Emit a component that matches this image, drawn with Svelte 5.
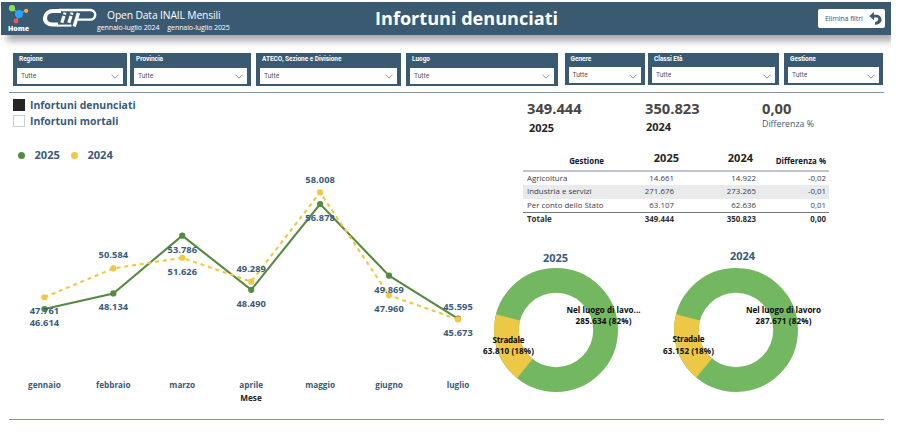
<script lang="ts">
  type Point = { month: string; y2025: number; y2024: number; label2025: number; label2024: number };

  const filters = [
    { name: 'Regione', width: 114, gap: 3 },
    { name: 'Provincia', width: 121, gap: 5 },
    { name: 'ATECO, Sezione e Divisione', width: 145, gap: 5 },
    { name: 'Luogo', width: 152, gap: 6.5 },
    { name: 'Genere', width: 80, gap: 3.5, short: true },
    { name: 'Classi Età', width: 131, gap: 5, short: true },
    { name: 'Gestione', width: 99, gap: 0, short: true }
  ];

  // label offsets are measured from the marker to the text baseline
  const points: Point[] = [
    { month: 'gennaio', y2025: 46614, y2024: 47761, label2025: 17, label2024: 17 },
    { month: 'febbraio', y2025: 48134, y2024: 50584, label2025: 17, label2024: -10 },
    { month: 'marzo', y2025: 53786, y2024: 51626, label2025: 17, label2024: 17 },
    { month: 'aprile', y2025: 48490, y2024: 49289, label2025: 17, label2024: -10 },
    { month: 'maggio', y2025: 56878, y2024: 58008, label2025: 17, label2024: -9.5 },
    { month: 'giugno', y2025: 49869, y2024: 47960, label2025: 17, label2024: 17 },
    { month: 'luglio', y2025: 45673, y2024: 45595, label2025: 17, label2024: -9 }
  ];

  const rows = [
    ['Agricoltura', '14.661', '14.922', '-0,02'],
    ['Industria e servizi', '271.676', '273.265', '-0,01'],
    ['Per conto dello Stato', '63.107', '62.636', '0,01']
  ];

  const donuts = [
    { year: '2025', work: 'Nel luogo di lavo...', workValue: '285.634 (82%)', workWidth: 74, road: '63.810 (18%)', share: 0.1826, roadY: 74.5, titleX: 61.5, titleY: -6 },
    { year: '2024', work: 'Nel luogo di lavoro', workValue: '287.671 (82%)', workWidth: 75, road: '63.152 (18%)', share: 0.18, roadY: 73.5, titleX: 68.5, titleY: -8 }
  ];

  const x = (i: number) => 44.4 + i * 68.93;
  const y = (v: number) => 44 + (56878 - v) * 0.01023;
  const format = (v: number) => `${Math.floor(v / 1000)}.${String(v % 1000).padStart(3, '0')}`;

  const line2025 = points.map((p, i) => `${x(i)},${y(p.y2025)}`).join(' ');
  const line2024 = points.map((p, i) => `${x(i)},${y(p.y2024)}`).join(' ');

  function slice(share: number) {
    const end = (284.7 * Math.PI) / 180;
    const start = end - share * 2 * Math.PI;
    const at = (a: number, r: number) => `${62 + r * Math.sin(a)} ${62 - r * Math.cos(a)}`;
    return `M${at(start, 62)} A62 62 0 0 1 ${at(end, 62)} L${at(end, 37.2)} A37.2 37.2 0 0 0 ${at(start, 37.2)} Z`;
  }
</script>

<div class="page">
  <header>
    <div class="home">
      <svg width="24" height="20" viewBox="0 0 24 20">
        <path d="M5 4L12 10L19 6.5M12 10L9 17.5" stroke="#42b7d2" stroke-width="1.3" fill="none" />
        <circle cx="5" cy="4.2" r="3.1" fill="#8be05b" />
        <circle cx="12" cy="9.9" r="4" fill="#2fa3fa" />
        <circle cx="19.2" cy="6.8" r="2.1" fill="#ffad3b" />
        <circle cx="9" cy="17" r="2.4" fill="#fb5552" />
      </svg>
      <span>Home</span>
    </div>
    <svg class="logo" width="55" height="20" viewBox="0 0 55 20">
      <g fill="none" stroke="#fff">
        <path d="M19 3H11.5C6.5 3 3.3 6 3 10C2.8 14 6 16.6 10.5 16.6H16" stroke-width="4" />
        <path d="M17 2H48C55 2 55 11.6 48 11.6H36" stroke-width="2.4" />
        <path d="M15 17.6H29.5" stroke-width="2" />
        <path d="M22 8L19.8 14.8M29 8L26.8 14.8" stroke-width="3.2" />
        <path d="M23 4.6L22.5 6.6M30 4.6L29.5 6.6" stroke-width="3" />
        <path d="M36.4 5L32.2 18.6" stroke-width="3.4" />
      </g>
    </svg>
    <div class="report">
      <div class="report-name">Open Data INAIL Mensili</div>
      <div class="periods"><span>gennaio-luglio 2024</span><span>gennaio-luglio 2025</span></div>
    </div>
    <h1>Infortuni denunciati</h1>
    <button class="reset">
      <span>Elimina filtri</span>
      <svg width="13" height="13" viewBox="0 0 13 13">
        <path d="M5 0L.3 4.1L5 8.2V5.6H7.4C9.7 5.6 9.8 8.3 8 9.3L6 10.3V12.8C10.2 12.6 12.8 10.4 12.5 7.2C12.2 4.2 10 2.7 7.4 2.7H5Z" fill="#3a5a72" />
      </svg>
    </button>
  </header>

  <div class="filters">
    {#each filters as f}
      <div class="filter" class:short={f.short} style="width:{f.width}px; margin-right:{f.gap}px">
        <div class="filter-name">{f.name}</div>
        <div class="select">
          <span>Tutte</span>
          <svg width="8" height="5" viewBox="0 0 8 5"><path d="M.5 .7L4 4.2L7.5 .7" fill="none" stroke="#777" stroke-width=".8" /></svg>
        </div>
      </div>
    {/each}
  </div>

  <main>
    <section class="trend">
      <div class="option"><i class="box checked"></i>Infortuni denunciati</div>
      <div class="option"><i class="box"></i>Infortuni mortali</div>
      <div class="legend">
        <i class="dot green"></i><span>2025</span>
        <i class="dot yellow"></i><span>2024</span>
      </div>
      <svg class="chart" width="490" height="250" viewBox="0 0 490 250">
        <polyline points={line2025} fill="none" stroke="#568a43" stroke-width="2.1" />
        {#each points as p, i}
          <circle cx={x(i)} cy={y(p.y2025)} r="3.1" fill="#568a43" />
        {/each}
        <polyline points={line2024} fill="none" stroke="#efc844" stroke-width="2.1" stroke-dasharray="4 3.8" />
        {#each points as p, i}
          <circle cx={x(i)} cy={y(p.y2024)} r="3.1" fill="#efc844" />
          <text x={x(i)} y={y(p.y2024) + p.label2024} textLength="29.5">{format(p.y2024)}</text>
          <text x={x(i)} y={y(p.y2025) + p.label2025} textLength="29.5">{format(p.y2025)}</text>
          <text class="month" x={x(i)} y="228">{p.month}</text>
        {/each}
        <text class="axis" x="251" y="241">Mese</text>
      </svg>
    </section>

    <section class="summary">
      <div class="kpis">
        <div><strong>349.444</strong><b class="first">2025</b></div>
        <div><strong>350.823</strong><b>2024</b></div>
        <div><strong>0,00</strong><span>Differenza %</span></div>
      </div>

      <table>
        <thead>
          <tr><th>Gestione</th><th class="year">2025</th><th class="year">2024</th><th>Differenza %</th></tr>
        </thead>
        <tbody>
          {#each rows as row}
            <tr>{#each row as cell}<td>{cell}</td>{/each}</tr>
          {/each}
        </tbody>
        <tfoot>
          <tr><td>Totale</td><td>349.444</td><td>350.823</td><td>0,00</td></tr>
        </tfoot>
      </table>

      <div class="donuts">
        {#each donuts as d}
          <svg width="124" height="124" viewBox="0 0 124 124">
            <circle cx="62" cy="62" r="49.6" fill="none" stroke="#74b761" stroke-width="24.8" />
            <path d={slice(d.share)} fill="#ecc846" />
            <text class="donut-year" x={d.titleX} y={d.titleY} textLength="25">{d.year}</text>
            <text x="109.5" y="45" textLength={d.workWidth}>{d.work}</text>
            <text x="109.5" y="56" textLength="56">{d.workValue}</text>
            <text x="14.5" y={d.roadY} textLength="32">Stradale</text>
            <text x="14.5" y="85.5" textLength="51">{d.road}</text>
          </svg>
        {/each}
      </div>
    </section>
  </main>
</div>

<style>
  :global(body) {
    margin: 0;
    background: #fff;
  }

  .page {
    box-sizing: border-box;
    width: 900px;
    height: 436px;
    padding-top: 2px;
    overflow: hidden;
    font-family: "Open Sans", "Noto Sans", sans-serif;
    color: #3a5a78;
  }

  header {
    box-sizing: border-box;
    display: flex;
    width: 890px;
    height: 33px;
    margin-left: 1px;
    background: #3a5a72;
    color: #fff;
    box-shadow: 5px 7px 7px -1px rgba(50, 50, 65, 0.42);
    clip-path: inset(0 0 -20px 0);
  }

  .home {
    width: 34px;
    padding: 2px 0 0 6px;
    box-sizing: border-box;
  }
  .home svg { display: block; }
  .home span {
    display: block;
    margin: -1px 0 0 1px;
    font-size: 7px;
    font-weight: 800;
    line-height: 11px;
  }

  .logo { margin: 6px 0 0 7px; }

  .report {
    width: 150px;
    margin-left: -1px;
    padding-top: 6px;
  }
  .report-name {
    padding-left: 11px;
    font-size: 10.3px;
    line-height: 14px;
    letter-spacing: -0.13px;
    white-space: nowrap;
  }
  .periods {
    display: flex;
    gap: 8px;
    padding-left: 1px;
    font-size: 7px;
    line-height: 11px;
    letter-spacing: -0.08px;
    white-space: nowrap;
  }

  h1 {
    width: 200px;
    margin: 3px 0 0 129px;
    font-size: 18.1px;
    line-height: 27px;
    white-space: nowrap;
  }

  .reset {
    display: flex;
    align-items: center;
    justify-content: space-between;
    width: 67px;
    height: 19px;
    margin: 7px 6px 0 auto;
    padding: 0 3px 0 7px;
    border: 0;
    border-radius: 2px;
    background: #fff;
    color: #3a5a78;
    font: 7.2px/19px "Open Sans", sans-serif;
    letter-spacing: -0.15px;
  }

  .filters {
    display: flex;
    width: 875px;
    height: 40px;
    margin: 18px 0 0 9px;
    padding-left: 4px;
    box-sizing: border-box;
    border-bottom: 1px solid #8195a8;
    font-family: Roboto, sans-serif;
  }
  .filter {
    box-sizing: border-box;
    flex: none;
    height: 33px;
    padding: 1px 4px 0;
    background: #3a5a72;
  }
  .filter.short { height: 32px; }
  .filter-name {
    height: 13.5px;
    padding-left: 2px;
    color: #fff;
    font-size: 6.5px;
    font-weight: 700;
    line-height: 10px;
    letter-spacing: -0.03px;
    white-space: nowrap;
  }
  .short .filter-name { height: 13px; }
  .select {
    display: flex;
    align-items: center;
    justify-content: space-between;
    height: 16px;
    padding: 0 4px;
    background: #fff;
    color: #555;
    font-size: 6.7px;
  }
  .select svg { margin-top: 2px; }

  main {
    display: grid;
    grid-template-columns: 482px 402px;
    width: 875px;
    height: 326px;
    margin-left: 9px;
    border-bottom: 1px solid #7f96aa;
  }

  .trend { padding-top: 4px; }
  .option {
    display: flex;
    align-items: center;
    gap: 5px;
    height: 16px;
    padding-left: 4px;
    font-size: 10.45px;
    font-weight: 700;
    line-height: 16px;
  }
  .box {
    box-sizing: border-box;
    width: 12px;
    height: 12px;
    border: 1px solid #ccc;
  }
  .box.checked { background: #252423; border-color: #252423; }

  .legend {
    display: flex;
    align-items: center;
    height: 14px;
    margin-top: 19px;
    padding-left: 9px;
    font-size: 11.1px;
    font-weight: 700;
    line-height: 14px;
  }
  .legend span { margin: 0 11px 0 9.5px; }
  .dot { width: 7px; height: 7px; border-radius: 50%; }
  .green { background: #568a43; }
  .yellow { background: #efc844; }

  .chart {
    display: block;
    margin: -2px 0 0 -9px;
  }
  svg text {
    font-weight: 700;
    text-anchor: middle;
  }
  .chart text { fill: #3a5a78; font-size: 9.3px; }
  .chart .month { font-size: 8.2px; }
  .chart .axis { fill: #252423; font-size: 8.2px; }

  .summary { padding-top: 6px; }
  .kpis {
    display: grid;
    grid-template-columns: 118px 117px 80px;
    height: 47px;
    padding-left: 36px;
  }
  .kpis strong {
    display: block;
    padding-bottom: 2px;
    color: #484644;
    font-size: 14.7px;
    line-height: 18px;
  }
  .kpis b {
    display: block;
    color: #252423;
    font-size: 11px;
    line-height: 16px;
    padding-left: 1px;
  }
  .kpis .first { padding: 1px 0 0 2px; }
  .kpis span {
    display: block;
    font-size: 8.8px;
    line-height: 10px;
    white-space: nowrap;
  }

  table {
    width: 306px;
    margin-left: 32px;
    table-layout: fixed;
    border-collapse: separate;
    border-spacing: 0;
    color: #3b3c4c;
    font-size: 7.9px;
  }
  th {
    height: 19px;
    padding: 0 3px 0 0;
    border-bottom: 2px solid #c1c4ce;
    color: #14142b;
    font-size: 7.9px;
    line-height: 18px;
    text-align: right;
    vertical-align: bottom;
  }
  th:first-child { width: 81px; padding-right: 0; }
  th:nth-child(2) { width: 75px; }
  th:nth-child(3) { width: 74px; }
  th:last-child { white-space: nowrap; }
  .year {
    padding-right: 0;
    color: #252423;
    font-size: 11px;
    line-height: 24px;
  }
  .year:nth-child(3) { padding-right: 4px; }
  td {
    height: 13.33px;
    padding: 0 3px 0 0;
    line-height: 13px;
    text-align: right;
    white-space: nowrap;
  }
  td:first-child { padding-left: 4px; text-align: left; }
  td:nth-child(2) { padding-right: 5px; }
  td:nth-child(3) { padding-right: 1px; }
  tbody tr:nth-child(2) td { background: #e9eaec; }
  tfoot td {
    border-top: 1px solid #717681;
    color: #303030;
    font-weight: 700;
  }

  .donuts {
    display: flex;
    gap: 56px;
    margin-top: 42px;
    padding-left: 2.5px;
  }
  .donuts svg { overflow: visible; }
  .donuts text { fill: #0c0c0c; font-size: 8.1px; }
  .donuts .donut-year { fill: #3a5a78; font-size: 11px; }
</style>
